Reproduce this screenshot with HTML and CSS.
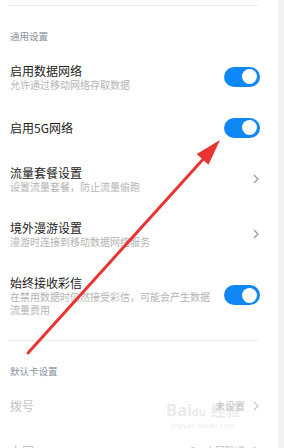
FILE: index.html
```html
<!DOCTYPE html>
<html lang="zh">
<head>
<meta charset="utf-8">
<link rel="stylesheet" href="styles.css">
</head>
<body>
<div class="screen">
  <div class="page">
    <div class="divider top"></div>
    <div class="section">通用设置</div>

    <div class="row">
      <div class="text">
        <div class="title">启用数据网络</div>
        <div class="sub">允许通过移动网络存取数据</div>
      </div>
      <div class="toggle"><span class="knob"></span></div>
    </div>

    <div class="row">
      <div class="text">
        <div class="title">启用5G网络</div>
      </div>
      <div class="toggle"><span class="knob"></span></div>
    </div>

    <div class="row">
      <div class="text">
        <div class="title">流量套餐设置</div>
        <div class="sub">设置流量套餐，防止流量偷跑</div>
      </div>
      <svg class="chev" viewBox="0 0 6 10" width="6" height="10"><polyline points="1,1 5,5 1,9" /></svg>
    </div>

    <div class="row">
      <div class="text">
        <div class="title">境外漫游设置</div>
        <div class="sub">漫游时连接到移动数据网络服务</div>
      </div>
      <svg class="chev" viewBox="0 0 6 10" width="6" height="10"><polyline points="1,1 5,5 1,9" /></svg>
    </div>

    <div class="row">
      <div class="text narrow">
        <div class="title">始终接收彩信</div>
        <div class="sub">在禁用数据时仍然接受彩信，可能会产生数据流量费用</div>
      </div>
      <div class="toggle"><span class="knob"></span></div>
    </div>

    <div class="divider mid"></div>
    <div class="section second">默认卡设置</div>

    <div class="row plain">
      <div class="title dim">拨号</div>
      <div class="right">
        <span class="value">未设置</span>
        <svg class="chev light" viewBox="0 0 6 10" width="6" height="10"><polyline points="1,1 5,5 1,9" /></svg>
      </div>
    </div>

    <div class="row plain">
      <div class="title dim">上网</div>
      <div class="right">
        <span class="sim">1</span>
        <span class="value">中国联通</span>
        <svg class="chev light" viewBox="0 0 6 10" width="6" height="10"><polyline points="1,1 5,5 1,9" /></svg>
      </div>
    </div>
  </div>
  <div class="strip"></div>

  <div class="watermark">
    <div class="wm-logo">Bai<span class="paw">du</span> 经验</div>
    <div class="wm-url">jingyan.baidu.com</div>
  </div>

  <svg class="arrow" width="284" height="448" viewBox="0 0 284 448">
    <line x1="28" y1="353" x2="206" y2="156" />
    <polygon points="220,140 208.5,164.7 196.7,153.9" />
  </svg>
</div>
</body>
</html>
```

FILE: styles.css
```css
* { box-sizing: border-box; }
html, body {
  margin: 0;
  padding: 0;
  background: #ffffff;
}
body {
  font-family: "Noto Sans CJK SC", "Noto Sans", sans-serif;
  width: 284px;
  height: 448px;
  overflow: hidden;
}
.screen {
  position: relative;
  display: flex;
  width: 284px;
  height: 448px;
  overflow: hidden;
}
.page {
  width: 278px;
  flex: none;
  padding: 5px 18px 0 10px;
  background: #ffffff;
}
.strip {
  flex: 1;
  background: #f2f2f2;
}
.divider {
  height: 1px;
  background: #ececec;
  margin-left: -2px;
  margin-right: 2px;
}
.divider.mid {
  margin-top: 11px;
}
.section {
  font-size: 9.5px;
  line-height: 14px;
  color: #8b90a0;
  padding: 23px 0 6px;
}
.section.second {
  padding: 23px 0 5px;
}
.row {
  display: flex;
  align-items: center;
  justify-content: space-between;
  padding: 13.5px 0;
}
.row.plain {
  padding: 15px 0;
}
.text {
  display: flex;
  flex-direction: column;
}
.text.narrow {
  width: 202px;
}
.title {
  font-size: 12px;
  line-height: 15px;
  color: #222222;
}
.title.dim {
  color: #c4c4c4;
}
.sub {
  font-size: 10px;
  line-height: 13px;
  color: #b4b4b4;
}
.toggle {
  flex: none;
  width: 36px;
  height: 20px;
  border-radius: 10px;
  background: #0f87f7;
  display: flex;
  align-items: center;
  justify-content: flex-end;
  padding-right: 3px;
}
.knob {
  width: 15px;
  height: 15px;
  border-radius: 50%;
  background: #ffffff;
}
.chev {
  flex: none;
  margin-right: 1px;
}
.chev polyline {
  fill: none;
  stroke: #9a9a9a;
  stroke-width: 1.2;
}
.chev.light polyline {
  stroke: #c8c8c8;
}
.right {
  display: flex;
  align-items: center;
  gap: 8px;
}
.value {
  font-size: 10px;
  color: #c0c0c0;
}
.sim {
  width: 8px;
  height: 8px;
  border: 1px solid #c8c8c8;
  border-radius: 50%;
  font-size: 5px;
  line-height: 6px;
  text-align: center;
  color: #c0c0c0;
}
.watermark {
  position: absolute;
  left: 166px;
  top: 402px;
  white-space: nowrap;
  color: rgba(210, 210, 210, 0.45);
  font-family: "DejaVu Sans", "Noto Sans CJK SC", sans-serif;
}
.wm-logo {
  font-size: 15px;
  line-height: 18px;
  font-weight: bold;
  letter-spacing: -0.3px;
}
.wm-logo .paw {
  font-size: 10px;
}
.wm-url {
  font-size: 7px;
  line-height: 9px;
  padding-left: 4px;
}
.arrow {
  position: absolute;
  left: 0;
  top: 0;
  pointer-events: none;
}
.arrow line {
  stroke: #e83432;
  stroke-width: 3;
  stroke-linecap: round;
}
.arrow polygon {
  fill: #e83432;
}
```
